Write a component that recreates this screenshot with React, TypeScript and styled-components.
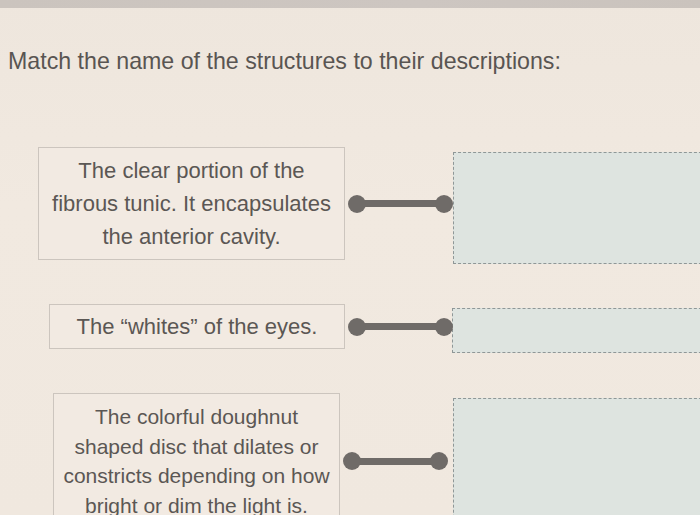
import React from "react";
import styled, { createGlobalStyle } from "styled-components";

const Global = createGlobalStyle`
  html, body {
    margin: 0;
    padding: 0;
    background: #f0e8df;
    overflow: hidden;
  }
  body {
    font-family: "Liberation Sans", Arial, sans-serif;
    color: #5b5754;
  }
`;

const Page = styled.div`
  width: 700px;
  height: 515px;
  overflow: hidden;
  background: linear-gradient(180deg, #eee6dd 0%, #f1e9e0 40%, #f0e8df 100%);
  display: flex;
  flex-direction: column;
`;

const TopBar = styled.div`
  height: 8px;
  flex: none;
  background: linear-gradient(90deg, #cbc4be 0%, #cdc6c1 60%, #cac3bd 100%);
`;

const Title = styled.h1`
  margin: 39px 0 0 8px;
  font-size: 23.2px;
  font-weight: 400;
  line-height: 28px;
  color: #595552;
`;

const List = styled.div`
  display: flex;
  flex-direction: column;
  gap: 44px;
  margin-top: 72px;
`;

const Row = styled.div<{ $indent: number }>`
  display: grid;
  grid-template-columns: auto 108px 1fr;
  align-items: center;
  padding-left: ${(p) => p.$indent}px;
  margin-right: -12px;
`;

const Card = styled.div<{ $width: number; $lh: number; $size: number; $height?: number }>`
  box-sizing: border-box;
  width: ${(p) => p.$width}px;
  ${(p) => (p.$height ? `height: ${p.$height}px;` : "")}
  border: 1px solid #ccc5be;
  background: #f2eae2;
  padding: 8px 4px;
  text-align: center;
  font-size: ${(p) => p.$size}px;
  line-height: ${(p) => p.$lh}px;
  color: #5b5754;
  display: flex;
  align-items: center;
  justify-content: center;
  white-space: nowrap;
`;

const Connector = styled.div`
  position: relative;
  height: 18px;
  margin-left: 3px;
  display: flex;
  align-items: center;
`;

const Bar = styled.div`
  flex: 1;
  height: 7px;
  margin: 0 8px;
  background: #6f6b68;
`;

const Dot = styled.span<{ $side: "left" | "right" }>`
  position: absolute;
  top: 0;
  ${(p) => p.$side}: 0;
  width: 18px;
  height: 18px;
  border-radius: 50%;
  background: #6f6b68;
`;

const Drop = styled.div<{ $height: number; $offset: number; $shift: number }>`
  box-sizing: border-box;
  height: ${(p) => p.$height}px;
  margin-top: ${(p) => p.$offset}px;
  margin-bottom: ${(p) => -p.$offset}px;
  margin-left: ${(p) => p.$shift}px;
  border: 1px dashed #8f9797;
  background: #dee4e0;
`;

type Item = {
  lines: string[];
  indent: number;
  width: number;
  lh: number;
  size: number;
  cardHeight?: number;
  dropHeight: number;
  dropOffset: number;
  dropShift: number;
};

const items: Item[] = [
  {
    lines: ["The clear portion of the", "fibrous tunic. It encapsulates", "the anterior cavity."],
    indent: 38,
    width: 307,
    lh: 33,
    size: 22,
    cardHeight: 113,
    dropHeight: 112,
    dropOffset: 4,
    dropShift: 0,
  },
  {
    lines: ["The \u201cwhites\u201d of the eyes."],
    indent: 49,
    width: 296,
    lh: 28,
    size: 22,
    cardHeight: 45,
    dropHeight: 45,
    dropOffset: 4,
    dropShift: -1,
  },
  {
    lines: [
      "The colorful doughnut",
      "shaped disc that dilates or",
      "constricts depending on how",
      "bright or dim the light is.",
    ],
    indent: 53,
    width: 287,
    lh: 29.5,
    size: 21,
    dropHeight: 130,
    dropOffset: 2,
    dropShift: 5,
  },
];

export default function App() {
  return (
    <>
      <Global />
      <Page>
        <TopBar />
        <Title>Match the name of the structures to their descriptions:</Title>
        <List>
          {items.map((it, i) => (
            <Row key={i} $indent={it.indent}>
              <Card $width={it.width} $lh={it.lh} $size={it.size} $height={it.cardHeight}>
                <div>
                  {it.lines.map((l, j) => (
                    <div key={j}>{l}</div>
                  ))}
                </div>
              </Card>
              <Connector>
                <Dot $side="left" />
                <Bar />
                <Dot $side="right" />
              </Connector>
              <Drop $height={it.dropHeight} $offset={it.dropOffset} $shift={it.dropShift} />
            </Row>
          ))}
        </List>
      </Page>
    </>
  );
}
